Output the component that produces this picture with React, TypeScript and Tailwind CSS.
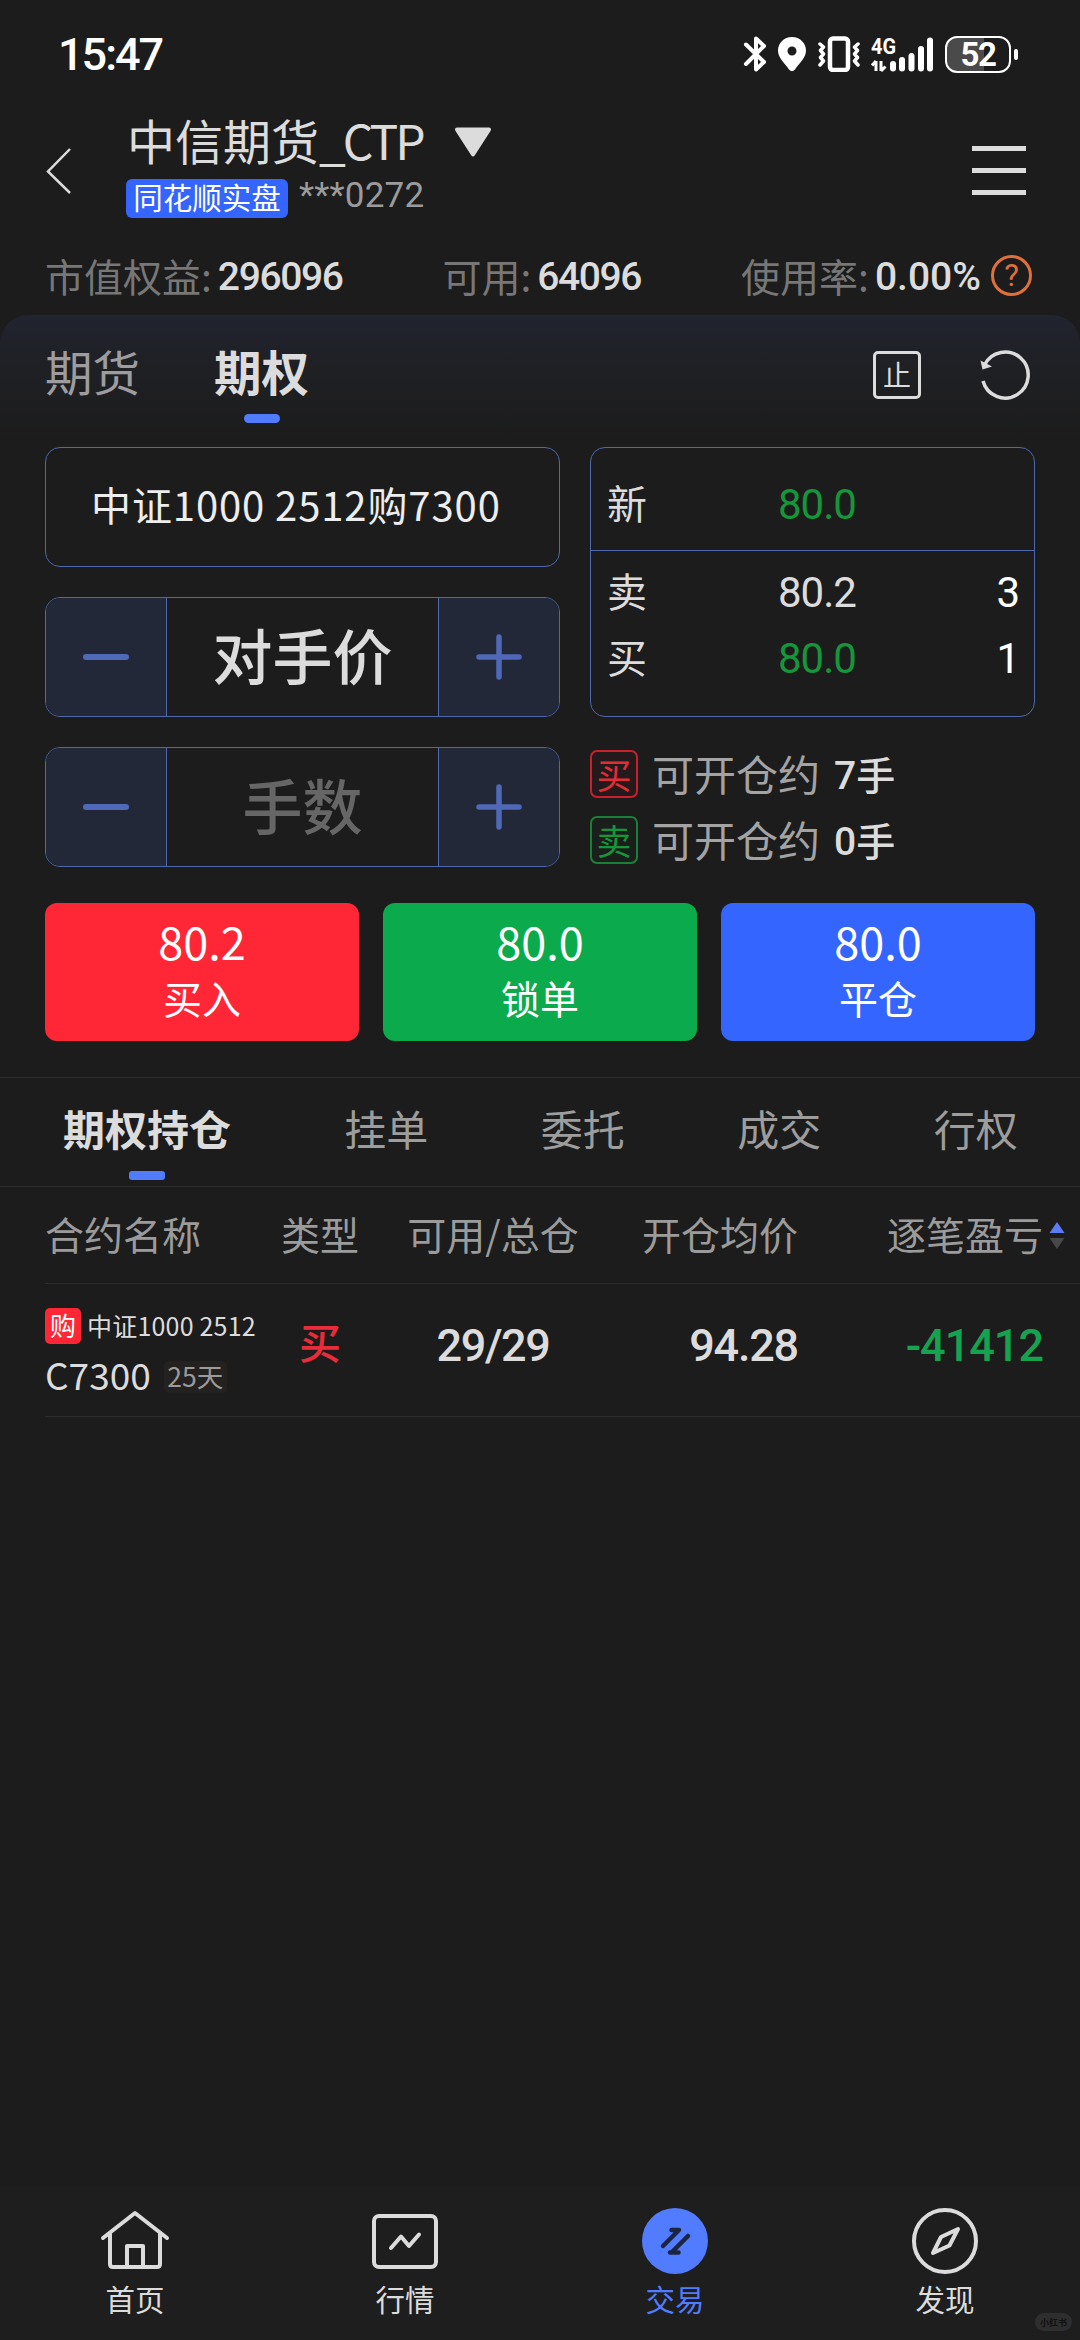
import { useState } from "react";
import clsx from "clsx";

const actions = [
  { price: "80.2", label: "买入", color: "bg-[#ff2636]" },
  { price: "80.0", label: "锁单", color: "bg-[#0bab4d]" },
  { price: "80.0", label: "平仓", color: "bg-[#3565ff]" },
];

const listTabs = ["期权持仓", "挂单", "委托", "成交", "行权"];

function StatusBar() {
  return (
    <div className="flex h-[108px] items-center justify-between pl-[58px] pr-[62px] text-white">
      <span className="font-[Roboto] text-[45px] font-medium leading-none tracking-[-2px]">15:47</span>
      <div className="flex items-center">
        <svg className="h-9 w-6" viewBox="0 0 24 36" fill="none" stroke="currentColor" strokeWidth="4" strokeLinecap="round" strokeLinejoin="round">
          <path d="M3 8.5L21 26L13 33.5V2.5L21 10L3 28" />
        </svg>
        <svg className="ml-[11px] h-9 w-7" viewBox="0 0 28 36" fill="currentColor" fillRule="evenodd">
          <path d="M14 1C6 1 0 7 0 14.5C0 22 6 26 11 33.5Q14 37 17 33.5C22 26 28 22 28 14.5C28 7 22 1 14 1ZM14 10.5A4.5 4.5 0 1 1 14 19.5A4.5 4.5 0 1 1 14 10.5Z" />
        </svg>
        <svg className="ml-3 h-9 w-[42px]" viewBox="0 0 42 36" fill="none" stroke="currentColor" strokeWidth="3.5" strokeLinejoin="round" strokeLinecap="round">
          <rect x="12" y="2.5" width="18" height="31.5" rx="3" strokeWidth="4.5" />
          <path d="M2 8L5.5 11L2.5 14.5L5.5 18L2.5 21.5L5.5 25L2 29M40 8L36.5 11L39.5 14.5L36.5 18L39.5 21.5L36.5 25L40 29" />
        </svg>
        <svg className="ml-[11px] h-[44px] w-[64px]" viewBox="0 -4 64 44" fill="currentColor">
          <text x="0" y="18" fontFamily="Roboto" fontWeight="700" fontSize="22.5" textLength="25" lengthAdjust="spacingAndGlyphs">4G</text>
          <path d="M5 25V35M5 25L1 29.5M10 25V35M10 35L14.5 30.5" stroke="currentColor" strokeWidth="3" />
          <rect x="19" y="25" width="6" height="10.5" rx="3" />
          <rect x="28" y="21" width="6" height="14.5" rx="3" />
          <rect x="37.5" y="17" width="6" height="18.5" rx="3" />
          <rect x="47" y="10" width="6" height="25.5" rx="3" />
          <rect x="56" y="1.5" width="6" height="34" rx="3" />
        </svg>
        <div className="ml-[10px] flex h-[37px] w-[66px] items-center justify-center rounded-[12px] border-[2.5px] border-white bg-[linear-gradient(90deg,#4a4a4a_59%,transparent_59%)] font-[Roboto] text-[33px] font-bold leading-none tracking-[-1.5px]">
          52
        </div>
        <div className="ml-[3px] h-[11px] w-1 rounded-full bg-white" />
      </div>
    </div>
  );
}

function Header() {
  return (
    <div className="flex h-[128px] items-center pl-[45px] pr-[54px]">
      <svg className="-mt-[2px] h-[48px] w-[28px]" viewBox="0 0 28 48" fill="none" stroke="#dcdcdc" strokeWidth="2.5">
        <path d="M25 2L3 24.5L25 46" />
      </svg>
      <div className="ml-[53px] self-start pt-[3px]">
        <div className="flex h-[56px] items-center">
          <span className="ml-[1px] whitespace-nowrap text-[48px] leading-[54px] text-[#dcdcdc]">
            中信期货<span className="tracking-[-3px]">_CTP</span>
          </span>
          <svg className="ml-[31px] mt-[5px] h-[30px] w-[38px]" viewBox="0 0 38 30" fill="#dcdcdc">
            <path d="M3 0.5H35Q38 1 36.5 4L21 28Q19 31 17 28L1.5 4Q0 1 3 0.5Z" />
          </svg>
        </div>
        <div className="mt-3 flex h-[39px] items-center">
          <span className="flex h-[39px] w-[162px] items-center justify-center rounded-[6px] bg-[#3565ff] pb-[3px] text-[29.5px] leading-none text-white">
            同花顺实盘
          </span>
          <span className="-mt-[7px] ml-[11px] font-[Roboto] text-[35px] leading-none tracking-[0.2px] text-[#9b9b9b]">***0272</span>
        </div>
      </div>
      <div className="-mt-[3px] ml-auto flex w-[54px] flex-col gap-[17px]">
        <span className="h-[5px] bg-[#dcdcdc]" />
        <span className="h-[5px] bg-[#dcdcdc]" />
        <span className="h-[5px] bg-[#dcdcdc]" />
      </div>
    </div>
  );
}

function Stat({ label, value, wide }: { label: string; value: string; wide?: boolean }) {
  return (
    <div className="flex items-center whitespace-nowrap">
      <span className="pb-[1px] text-[39px] leading-none text-[#777]">{label}:</span>
      <span
        className={clsx(
          "ml-[6px] pt-[4px] font-[Roboto] text-[39px] font-medium leading-none text-[#dcdcdc]",
          wide ? "tracking-normal" : "tracking-[-1.4px]"
        )}
      >
        {value}
      </span>
    </div>
  );
}

function Stepper({ text, muted }: { text: string; muted?: boolean }) {
  return (
    <div className="flex h-[120px] overflow-hidden rounded-[15px] border border-[#4d68ad]">
      <button className="flex w-[121px] items-center justify-center border-r border-[#4d68ad] bg-[#222838]">
        <span className="h-[6px] w-[46px] rounded-full bg-[#5068b8]" />
      </button>
      <div
        className={clsx(
          "flex flex-1 items-center justify-center pb-[7px] text-[60px] font-medium leading-none",
          muted ? "text-[#666]" : "text-[#dcdcdc]"
        )}
      >
        {text}
      </div>
      <button className="flex w-[121px] items-center justify-center border-l border-[#4d68ad] bg-[#222838]">
        <svg className="size-[46px]" viewBox="0 0 46 46" stroke="#5068b8" strokeWidth="5.5" strokeLinecap="round">
          <path d="M3 23H43M23 3V43" />
        </svg>
      </button>
    </div>
  );
}

function QuoteRow({ label, price, qty, up }: { label: string; price: string; qty?: string; up?: boolean }) {
  return (
    <div className="flex h-[66px] items-center">
      <span className="w-[171px] pb-[4px] text-[40px] leading-none text-[#dcdcdc]">{label}</span>
      <span className={clsx("pt-[2px] font-[Roboto] text-[42px] leading-none tracking-[-1px]", up ? "text-[#dcdcdc]" : "text-[#16963a]")}>
        {price}
      </span>
      <span className="ml-auto pt-[2px] font-[Roboto] text-[42px] leading-none text-white">{qty}</span>
    </div>
  );
}

function OpenRow({ side, count }: { side: string; count: string }) {
  const buy = side === "买";
  return (
    <div className="flex h-12 items-center">
      <span
        className={clsx(
          "flex size-12 items-center justify-center rounded-[7px] border-2 pb-[2px] text-[35px] leading-none",
          buy ? "border-[#c8202c] bg-[#241a1b] text-[#e22c38]" : "border-[#1a8038] bg-[#1a1f1b] text-[#16963a]"
        )}
      >
        {side}
      </span>
      <span className="ml-[14px] pb-[2px] text-[42px] leading-none text-[#a3a3a3]">可开仓约</span>
      <span className="ml-[14px] pt-[5px] font-[Roboto] text-[39px] font-medium leading-none text-[#dcdcdc]">{count}</span>
      <span className="pb-[2px] text-[39px] font-medium leading-none text-[#dcdcdc]">手</span>
    </div>
  );
}

function NavItem({ label, active, children }: { label: string; active?: boolean; children: React.ReactNode }) {
  return (
    <button className={clsx("flex flex-1 flex-col items-center pt-[18px]", active ? "text-[#527cff]" : "text-[#dcdcdc]")}>
      <svg className="size-[72px]" viewBox="0 0 72 72" fill="none" stroke="currentColor" strokeWidth="4" strokeLinecap="round" strokeLinejoin="round">
        {children}
      </svg>
      <span className="mt-[1px] text-[29.5px] leading-[40px]">{label}</span>
    </button>
  );
}

export default function App() {
  const [tab, setTab] = useState(0);

  return (
    <div className="relative flex h-[2340px] w-[1080px] flex-col overflow-hidden bg-[#1c1c1c] font-['Noto_Sans_CJK_SC',sans-serif]">
      <StatusBar />
      <Header />

      <div className="flex h-[79px] items-center justify-between pl-[45px] pr-[48px]">
        <Stat label="市值权益" value="296096" />
        <Stat label="可用" value="64096" />
        <div className="flex items-center">
          <Stat label="使用率" value="0.00%" wide />
          <span className="ml-[10px] flex size-[41px] items-center justify-center rounded-full border-[3px] border-[#e0703a] font-[Roboto] text-[31px] leading-none text-[#e0703a]">
            ?
          </span>
        </div>
      </div>

      {/* Order panel */}
      <div className="rounded-t-[28px] bg-[linear-gradient(180deg,#21232f_0px,#1f2024_55px,#1c1c1c_125px)] px-[45px]">
        <div className="flex h-[116px] items-center">
          <button className="pb-[5px] text-[47.5px] leading-none text-[#9d9d9f]">期货</button>
          <button className="relative ml-[74px] flex h-full items-center pb-[5px] text-[47.5px] font-bold leading-none text-[#dcdcdc]">
            期权
            <span className="absolute bottom-2 left-1/2 h-[9px] w-9 -translate-x-1/2 rounded-full bg-[#527cff]" />
          </button>
          <span className="ml-auto mt-1 flex size-12 items-center justify-center rounded-[5px] border-[3.5px] border-[#dcdcdc] pb-[2px] text-[28px] leading-none text-[#dcdcdc]">
            止
          </span>
          <svg className="ml-[58px] mr-[4px] mt-1 h-[52px] w-[52px]" viewBox="0 0 52 52" fill="none" stroke="#dcdcdc" strokeWidth="3.5">
            <path d="M4 32A23 23 0 1 0 5.5 16" />
            <path d="M1.5 11.5L3.5 20.5L13 17.5Z" fill="#dcdcdc" stroke="none" />
          </svg>
        </div>

        <div className="mt-4 flex gap-[30px]">
          <div className="flex w-[515px] flex-col gap-[30px]">
            <div className="flex h-[120px] items-center rounded-[15px] border border-[#4d68ad] pb-[6px] pl-[45px] text-[40px] leading-none tracking-[0.9px] text-[#ededed]">
              中证1000 2512购7300
            </div>
            <Stepper text="对手价" />
            <Stepper text="手数" muted />
          </div>

          <div className="flex w-[445px] flex-col">
            <div className="h-[270px] rounded-[15px] border border-[#4d68ad]">
              <div className="flex h-[103px] flex-col justify-center border-b border-[#4d68ad] px-4 pt-[9px]">
                <QuoteRow label="新" price="80.0" />
              </div>
              <div className="pl-4 pr-[14px] pt-[8px]">
                <QuoteRow label="卖" price="80.2" qty="3" up />
                <QuoteRow label="买" price="80.0" qty="1" />
              </div>
            </div>
            <div className="mt-[33px] flex flex-col gap-[18px]">
              <OpenRow side="买" count="7" />
              <OpenRow side="卖" count="0" />
            </div>
          </div>
        </div>

        <div className="mt-9 grid grid-cols-3 gap-6">
          {actions.map((a) => (
            <button key={a.label} className={clsx("flex h-[138px] flex-col items-center rounded-[12px] pt-[10px] text-white", a.color)}>
              <span className="text-[45px] leading-[56px]">{a.price}</span>
              <span className="mt-[2px] text-[39px] leading-[52px]">{a.label}</span>
            </button>
          ))}
        </div>
      </div>

      {/* Position list */}
      <div className="mt-9 flex h-[110px] border-y border-[#2d2d2d]">
        {listTabs.map((name, i) => (
          <button
            key={name}
            onClick={() => setTab(i)}
            className={clsx(
              "relative pb-[8px] text-[42px] leading-none",
              i === 0 ? "ml-[6px] w-[282px]" : "w-[196.5px]",
              tab === i ? "font-bold text-[#dcdcdc]" : "text-[#9d9d9d]"
            )}
          >
            {name}
            {tab === i && <span className="absolute bottom-[6px] left-1/2 h-[9px] w-9 -translate-x-1/2 rounded-[3px] bg-[#527cff]" />}
          </button>
        ))}
      </div>

      <div className="ml-[45px]">
        <div className="grid h-[97px] grid-cols-[235px_80px_266px_172px_245px_37px] items-center whitespace-nowrap border-b border-[#2d2d2d] pb-[4px] text-[39px] leading-none text-[#9b9b9b]">
          <span>合约名称</span>
          <span className="text-center">类型</span>
          <span className="text-center">可用/总仓</span>
          <span className="text-right">开仓均价</span>
          <span className="text-right">逐笔盈亏</span>
          <svg className="ml-[6px] mt-[4px] h-[27px] w-4" viewBox="0 0 16 27">
            <path d="M8 0L15.5 11H0.5Z" fill="#5b7cf5" />
            <path d="M8 27L15.5 16H0.5Z" fill="#484848" />
          </svg>
        </div>

        <div className="grid h-[133px] grid-cols-[235px_80px_266px_172px_245px_37px] items-center whitespace-nowrap border-b border-[#2d2d2d]">
          <div className="flex flex-col pt-[3px]">
            <div className="flex h-9 items-center">
              <span className="flex size-9 items-center justify-center rounded-[5px] bg-[#ff2636] pb-[2px] text-[26px] leading-none text-white">购</span>
              <span className="ml-[6px] text-[25px] leading-none tracking-[0.2px] text-[#dcdcdc]">中证1000 2512</span>
            </div>
            <div className="mt-[10px] flex h-[42px] items-center">
              <span className="text-[37px] leading-none text-[#dcdcdc]">C7300</span>
              <span className="ml-[13px] mt-[4px] flex h-8 w-[63px] items-center justify-center rounded-[5px] bg-[#242121] pb-[1px] text-[26.5px] leading-none text-[#9b9b9b]">
                25天
              </span>
            </div>
          </div>
          <span className="pb-[18px] text-center text-[42px] font-medium leading-none text-[#e92c3a]">买</span>
          <span className="pb-[9px] text-center font-[Roboto] text-[45px] font-medium leading-none tracking-[-1.4px] text-[#dcdcdc]">29/29</span>
          <span className="pb-[9px] text-right font-[Roboto] text-[45px] font-medium leading-none tracking-[-1.2px] text-[#dcdcdc]">94.28</span>
          <span className="pb-[9px] text-right font-[Roboto] text-[45px] font-medium leading-none tracking-[-1px] text-[#16a350]">-41412</span>
        </div>
      </div>

      <div className="mt-auto flex h-[153px] bg-[#1e1e1e]">
        <NavItem label="首页">
          <path d="M4 33L36 8L68 33M11 29V59Q11 62 14 62H58Q61 62 61 59V29M28 61V41H44V61" />
        </NavItem>
        <NavItem label="行情">
          <rect x="5" y="11" width="62" height="51" rx="5" />
          <path d="M22 43L32 31.5L40 41L50 29.5" />
        </NavItem>
        <NavItem label="交易" active>
          <circle cx="36" cy="36" r="33" fill="currentColor" stroke="none" />
          <path d="M32.5 25H40L24 41M31 47.5H39.5M33 47L49 31" stroke="#1b2540" strokeWidth="4.5" />
        </NavItem>
        <NavItem label="发现">
          <circle cx="36" cy="36" r="31" />
          <path d="M49 24L40.5 40.5L24 48L32 32Z" />
        </NavItem>
      </div>

      <div className="absolute bottom-[9px] right-2 flex h-[18px] w-[37px] items-center justify-center rounded-full bg-[#2e2e2e] text-[9px] font-bold leading-none text-[#111]">
        小红书
      </div>
    </div>
  );
}
